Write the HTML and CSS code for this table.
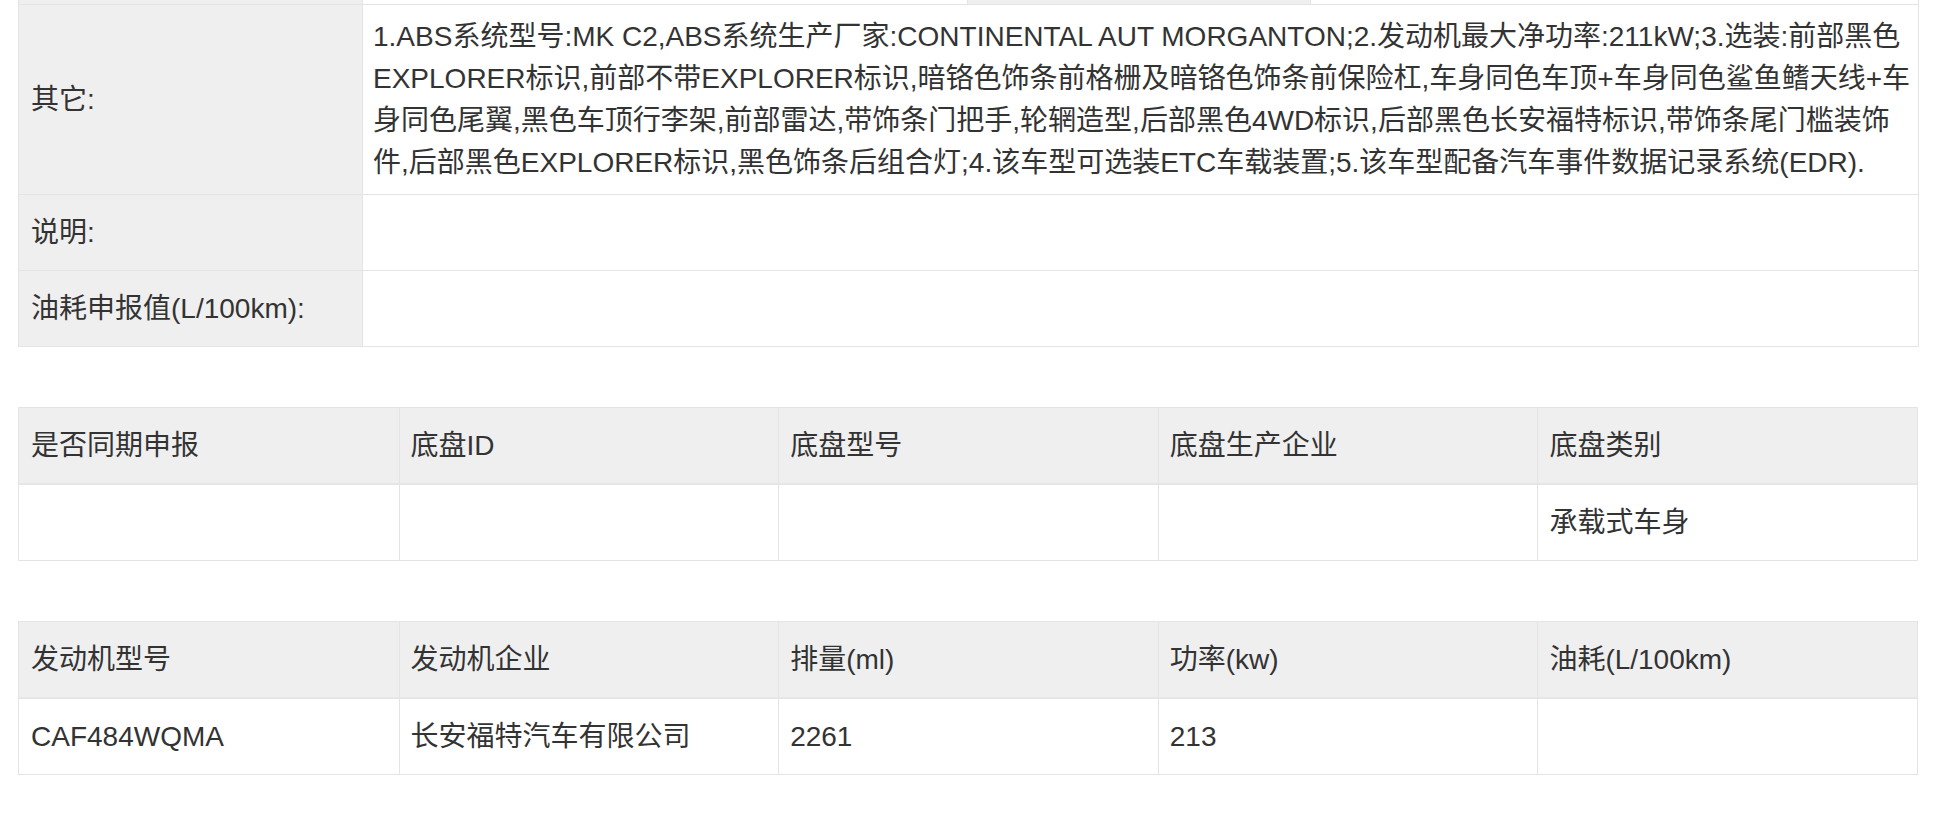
FILE: index.html
```html
<!DOCTYPE html>
<html lang="zh-CN">
<head>
<meta charset="utf-8">
<title>车型参数</title>
<link rel="stylesheet" href="styles.css">
</head>
<body>
<div class="page">
  <table class="grid info">
    <colgroup>
      <col class="c-label"><col class="c-value"><col class="c-label2"><col class="c-value2">
    </colgroup>
    <tr class="cut">
      <td class="label"></td><td class="value"></td><td class="label"></td><td class="value"></td>
    </tr>
    <tr class="tall">
      <td class="label">其它:</td>
      <td class="value multi" colspan="3">1.ABS系统型号:MK C2,ABS系统生产厂家:CONTINENTAL AUT MORGANTON;2.发动机最大净功率:211kW;3.选装:前部黑色<br>EXPLORER标识,前部不带EXPLORER标识,暗铬色饰条前格栅及暗铬色饰条前保险杠,车身同色车顶+车身同色鲨鱼鳍天线+车<br>身同色尾翼,黑色车顶行李架,前部雷达,带饰条门把手,轮辋造型,后部黑色4WD标识,后部黑色长安福特标识,带饰条尾门槛装饰<br>件,后部黑色EXPLORER标识,黑色饰条后组合灯;4.该车型可选装ETC车载装置;5.该车型配备汽车事件数据记录系统(EDR).</td>
    </tr>
    <tr class="row">
      <td class="label">说明:</td>
      <td class="value" colspan="3"></td>
    </tr>
    <tr class="row">
      <td class="label">油耗申报值(L/100km):</td>
      <td class="value" colspan="3"></td>
    </tr>
  </table>

  <table class="grid five">
    <tr class="head">
      <td>是否同期申报</td><td>底盘ID</td><td>底盘型号</td><td>底盘生产企业</td><td>底盘类别</td>
    </tr>
    <tr class="row">
      <td></td><td></td><td></td><td></td><td>承载式车身</td>
    </tr>
  </table>

  <table class="grid five">
    <tr class="head">
      <td>发动机型号</td><td>发动机企业</td><td>排量(ml)</td><td>功率(kw)</td><td>油耗(L/100km)</td>
    </tr>
    <tr class="row">
      <td>CAF484WQMA</td><td>长安福特汽车有限公司</td><td>2261</td><td>213</td><td></td>
    </tr>
  </table>
</div>
</body>
</html>
```

FILE: styles.css
```css
html, body {
  margin: 0;
  padding: 0;
  background: #ffffff;
}

.page {
  padding-left: 18px;
  width: 1900px;
  font-family: "Liberation Sans", "Noto Sans CJK SC", sans-serif;
  font-size: 28px;
  color: #333333;
  display: flex;
  flex-direction: column;
  gap: 60px;
}

.grid {
  width: 1900px;
  table-layout: fixed;
  border-collapse: separate;
  border-spacing: 0;
  border-left: 1px solid #e4e4e4;
}

.grid td {
  border-right: 1px solid #e4e4e4;
  border-bottom: 1px solid #e4e4e4;
  padding: 0 11px;
  line-height: 42px;
  vertical-align: middle;
  white-space: nowrap;
  overflow: hidden;
}

.c-label { width: 344px; }
.c-value { width: 605px; }
.c-label2 { width: 343px; }
.c-value2 { width: 608px; }

.info .label {
  background: #efefef;
  padding-left: 12px;
}

.info .value {
  background: #ffffff;
}

.info .cut td {
  height: 4px;
  padding: 0;
  line-height: 4px;
}

.info .tall td {
  height: 169px;
  padding-top: 10px;
  padding-bottom: 10px;
}

.info .multi {
  padding-left: 10px;
}

.row td {
  height: 75px;
  padding-top: 0;
  padding-bottom: 0;
}

.five {
  border-top: 1px solid #e4e4e4;
}

.five td {
  width: 20%;
  padding-left: 11px;
}

.five tr td:first-child {
  padding-left: 12px;
}

.head td {
  background: #efefef;
  height: 75px;
  border-bottom: 2px solid #e6e6e6;
}
```
